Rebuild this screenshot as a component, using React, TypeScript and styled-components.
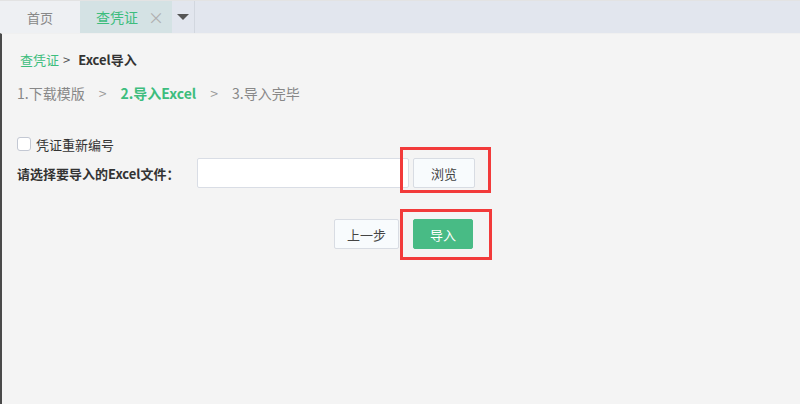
import styled, { createGlobalStyle } from 'styled-components';

const GlobalStyle = createGlobalStyle`
  html, body {
    margin: 0;
    padding: 0;
    background: #f4f4f4;
    font-family: "Microsoft YaHei", "Noto Sans CJK SC", "Noto Sans", sans-serif;
  }
  * {
    box-sizing: border-box;
  }
`;

const Page = styled.div`
  position: relative;
  width: 800px;
  height: 404px;
  display: flex;
  flex-direction: column;
  overflow: hidden;
`;

const TabBar = styled.div`
  height: 33px;
  display: flex;
  background: #e2e6ee;
  border-top: 1px solid #e3e3e3;
`;

const Tab = styled.div<{ $active?: boolean }>`
  display: flex;
  align-items: center;
  padding-left: ${({ $active }) => ($active ? '16px' : '0')};
  justify-content: ${({ $active }) => ($active ? 'flex-start' : 'center')};
  width: ${({ $active }) => ($active ? '92px' : '80px')};
  background: ${({ $active }) => ($active ? '#d4e2e4' : '#eef0f3')};
  color: ${({ $active }) => ($active ? '#3dbd7d' : '#888')};
  font-size: ${({ $active }) => ($active ? '14px' : '13px')};
`;

const Close = styled.span`
  margin-left: auto;
  margin-right: 8px;
  color: #b0b0b0;
  font-size: 16px;
  line-height: 1;
`;

const Dropdown = styled.div`
  width: 23px;
  display: flex;
  align-items: center;
  justify-content: center;
  border-right: 1px solid #d2d7df;
`;

const Caret = styled.span`
  width: 0;
  height: 0;
  border-left: 6px solid transparent;
  border-right: 6px solid transparent;
  border-top: 6px solid #555;
`;

const Content = styled.div`
  flex: 1;
  border-left: 2px solid #4a4a4a;
  border-top: 1px solid #f0f0f0;
  padding: 15px 0 0 15px;
  color: #333;
`;

const Crumbs = styled.div`
  height: 20px;
  display: flex;
  align-items: center;
  padding-left: 3px;
  font-size: 13px;
`;

const CrumbLink = styled.span`
  color: #3dbd7d;
`;

const CrumbSep = styled.span`
  margin: 0 8px 0 4px;
  color: #555;
`;

const CrumbCurrent = styled.span`
  font-weight: bold;
  color: #333;
`;

const Steps = styled.div`
  margin-top: 14px;
  height: 20px;
  display: flex;
  align-items: center;
  font-size: 14px;
  color: #888;
`;

const Step = styled.span<{ $current?: boolean }>`
  color: ${({ $current }) => ($current ? '#3dbd7d' : '#888')};
  font-weight: ${({ $current }) => ($current ? 'bold' : 'normal')};
`;

const StepSep = styled.span`
  margin: 0 14px;
  color: #999;
`;

const CheckRow = styled.label`
  margin-top: 31px;
  height: 20px;
  display: flex;
  align-items: center;
  font-size: 13px;
  color: #333;
`;

const Box = styled.span`
  width: 14px;
  height: 14px;
  border: 1px solid #c3c8d3;
  border-radius: 3px;
  background: #fff;
  margin-right: 5px;
`;

const FileRow = styled.div`
  margin-top: 4px;
  display: flex;
  align-items: center;
  height: 30px;
`;

const FileLabel = styled.span`
  width: 180px;
  font-size: 13px;
  font-weight: bold;
  color: #333;
`;

const FileInput = styled.div`
  width: 212px;
  height: 30px;
  background: #fff;
  border: 1px solid #d9dde5;
  border-radius: 2px;
`;

const Button = styled.button<{ $primary?: boolean; $w: number }>`
  width: ${({ $w }) => $w}px;
  height: 30px;
  font-family: inherit;
  font-size: 13px;
  border-radius: 2px;
  border: 1px solid ${({ $primary }) => ($primary ? '#48bb85' : '#d8dce3')};
  background: ${({ $primary }) => ($primary ? '#48bb85' : '#f8fbfd')};
  color: ${({ $primary }) => ($primary ? '#fff' : '#444')};
  padding: 0;
`;

const BrowseButton = styled(Button)`
  margin-left: 4px;
`;

const Actions = styled.div`
  margin-top: 31px;
  padding-left: 317px;
  display: flex;
  gap: 14px;
`;

const Mark = styled.div<{ $x: number; $y: number; $w: number; $h: number }>`
  position: absolute;
  left: ${({ $x }) => $x}px;
  top: ${({ $y }) => $y}px;
  width: ${({ $w }) => $w}px;
  height: ${({ $h }) => $h}px;
  border: 3px solid #f23a3a;
  pointer-events: none;
`;

export default function App() {
  return (
    <>
      <GlobalStyle />
      <Page>
        <TabBar>
          <Tab>首页</Tab>
          <Tab $active>
            查凭证
            <Close>×</Close>
          </Tab>
          <Dropdown>
            <Caret />
          </Dropdown>
        </TabBar>
        <Content>
          <Crumbs>
            <CrumbLink>查凭证</CrumbLink>
            <CrumbSep>&gt;</CrumbSep>
            <CrumbCurrent>Excel导入</CrumbCurrent>
          </Crumbs>
          <Steps>
            <Step>1.下载模版</Step>
            <StepSep>&gt;</StepSep>
            <Step $current>2.导入Excel</Step>
            <StepSep>&gt;</StepSep>
            <Step>3.导入完毕</Step>
          </Steps>
          <CheckRow>
            <Box />
            凭证重新编号
          </CheckRow>
          <FileRow>
            <FileLabel>请选择要导入的Excel文件：</FileLabel>
            <FileInput />
            <BrowseButton $w={62}>浏览</BrowseButton>
          </FileRow>
          <Actions>
            <Button $w={65}>上一步</Button>
            <Button $w={60} $primary>
              导入
            </Button>
          </Actions>
        </Content>
        <Mark $x={400} $y={147} $w={91} $h={46} />
        <Mark $x={400} $y={209} $w={92} $h={51} />
      </Page>
    </>
  );
}
